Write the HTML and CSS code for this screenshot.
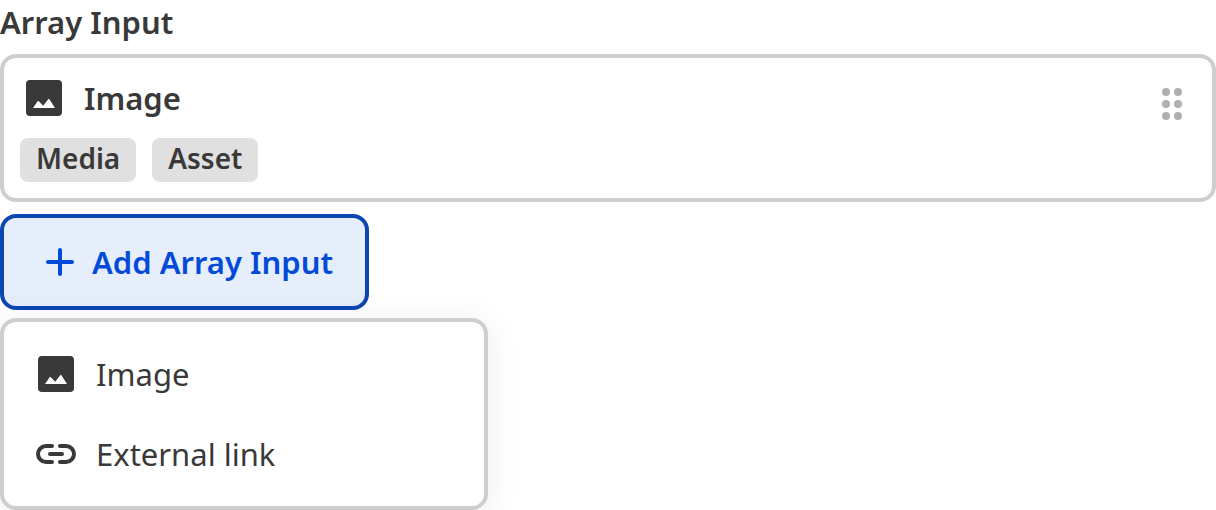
FILE: index.html
```html
<!DOCTYPE html>
<html lang="en">
<head>
    <meta charset="UTF-8">
    <meta name="viewport" content="width=device-width, initial-scale=1.0">
    <title>Array Input</title>
    <link rel="stylesheet" href="styles.css">
</head>
<body>
    <div class="array-input">
        <h1 class="array-title">Array Input</h1>

        <div class="array-item">
            <div class="item-content">
                <div class="item-header">
                    <svg class="icon" viewBox="0 0 24 24" aria-hidden="true">
                        <path fill="currentColor" fill-rule="evenodd" d="M5 3h14a2 2 0 0 1 2 2v14a2 2 0 0 1-2 2H5a2 2 0 0 1-2-2V5a2 2 0 0 1 2-2zM6.5 17h11l-2.8-4.4q-.3-.4-.6 0L11.6 15.9 9.4 13.6q-.3-.3-.6 0z"/>
                    </svg>
                    <span class="item-name">Image</span>
                </div>
                <div class="tags">
                    <span class="tag">Media</span>
                    <span class="tag">Asset</span>
                </div>
            </div>
            <button class="drag-handle" type="button" aria-label="Reorder">
                <svg class="icon" viewBox="0 0 24 24" aria-hidden="true">
                    <g fill="currentColor">
                        <circle cx="9" cy="6" r="2"/>
                        <circle cx="15" cy="6" r="2"/>
                        <circle cx="9" cy="12" r="2"/>
                        <circle cx="15" cy="12" r="2"/>
                        <circle cx="9" cy="18" r="2"/>
                        <circle cx="15" cy="18" r="2"/>
                    </g>
                </svg>
            </button>
        </div>

        <button class="add-button" type="button" aria-expanded="true">
            <svg class="icon" viewBox="0 0 24 24" aria-hidden="true">
                <path fill="none" stroke="currentColor" stroke-width="2" stroke-linecap="round" d="M12 6v12M6 12h12"/>
            </svg>
            <span>Add Array Input</span>
        </button>

        <div class="menu">
            <button class="menu-item" type="button">
                <svg class="icon" viewBox="0 0 24 24" aria-hidden="true">
                    <path fill="currentColor" fill-rule="evenodd" d="M5 3h14a2 2 0 0 1 2 2v14a2 2 0 0 1-2 2H5a2 2 0 0 1-2-2V5a2 2 0 0 1 2-2zM6.5 17h11l-2.8-4.4q-.3-.4-.6 0L11.6 15.9 9.4 13.6q-.3-.3-.6 0z"/>
                </svg>
                <span>Image</span>
            </button>
            <button class="menu-item" type="button">
                <svg class="icon" viewBox="0 0 24 24" aria-hidden="true">
                    <path fill="none" stroke="currentColor" stroke-width="2" stroke-linecap="round" d="M10 8H7a4 4 0 0 0 0 8h3M14 8h3a4 4 0 0 1 0 8h-3M9 12h6"/>
                </svg>
                <span>External link</span>
            </button>
        </div>
    </div>
</body>
</html>
```
FILE: styles.css
```css
* {
    box-sizing: border-box;
}

body {
    margin: 0;
    background-color: #fff;
    color: #393939;
    font-family: "Noto Sans", sans-serif;
    font-size: 31px;
    line-height: 48px;
}

button {
    margin: 0;
    color: inherit;
    font: inherit;
    cursor: pointer;
}

.array-input {
    display: flex;
    flex-direction: column;
    align-items: flex-start;
}

.array-title {
    margin: 0 0 10px;
    font-size: 31px;
    font-weight: 600;
    line-height: 44px;
}

.icon {
    display: block;
    flex: none;
    width: 48px;
    height: 48px;
}

.array-item {
    display: flex;
    align-self: stretch;
    justify-content: space-between;
    align-items: flex-start;
    margin-bottom: 12px;
    padding: 16px;
    border: 4px solid #cecece;
    border-radius: 16px;
}

.item-header {
    display: flex;
    align-items: center;
    gap: 16px;
    margin-bottom: 16px;
}

.item-name {
    font-weight: 600;
}

.tags {
    display: flex;
    gap: 16px;
}

.tag {
    padding: 0 16px 4px;
    border-radius: 8px;
    background-color: #e0e0e0;
    font-size: 28px;
    font-weight: 600;
    line-height: 40px;
}

.drag-handle {
    display: flex;
    align-items: center;
    height: 60px;
    padding: 0;
    border: none;
    background: none;
    color: #afafaf;
    cursor: grab;
}

.add-button {
    display: flex;
    align-items: center;
    gap: 8px;
    margin-bottom: 8px;
    padding: 20px 32px;
    border: 4px solid #0d46b3;
    border-radius: 16px;
    background-color: #e6edfb;
    color: #024ad8;
    font-weight: 600;
}

.menu {
    position: relative;
    width: 100%;
    max-width: 488px;
    padding: 12px 0;
    border: 4px solid #cecece;
    border-radius: 16px;
    background-color: #fff;
    box-shadow: 0 4px 36px rgba(0, 0, 0, 0.08);
}

.menu-item {
    display: flex;
    align-items: center;
    gap: 16px;
    width: 100%;
    padding: 16px 28px;
    border: none;
    background: none;
    text-align: left;
}

.menu-item:hover {
    background-color: #f2f2f2;
}
```
